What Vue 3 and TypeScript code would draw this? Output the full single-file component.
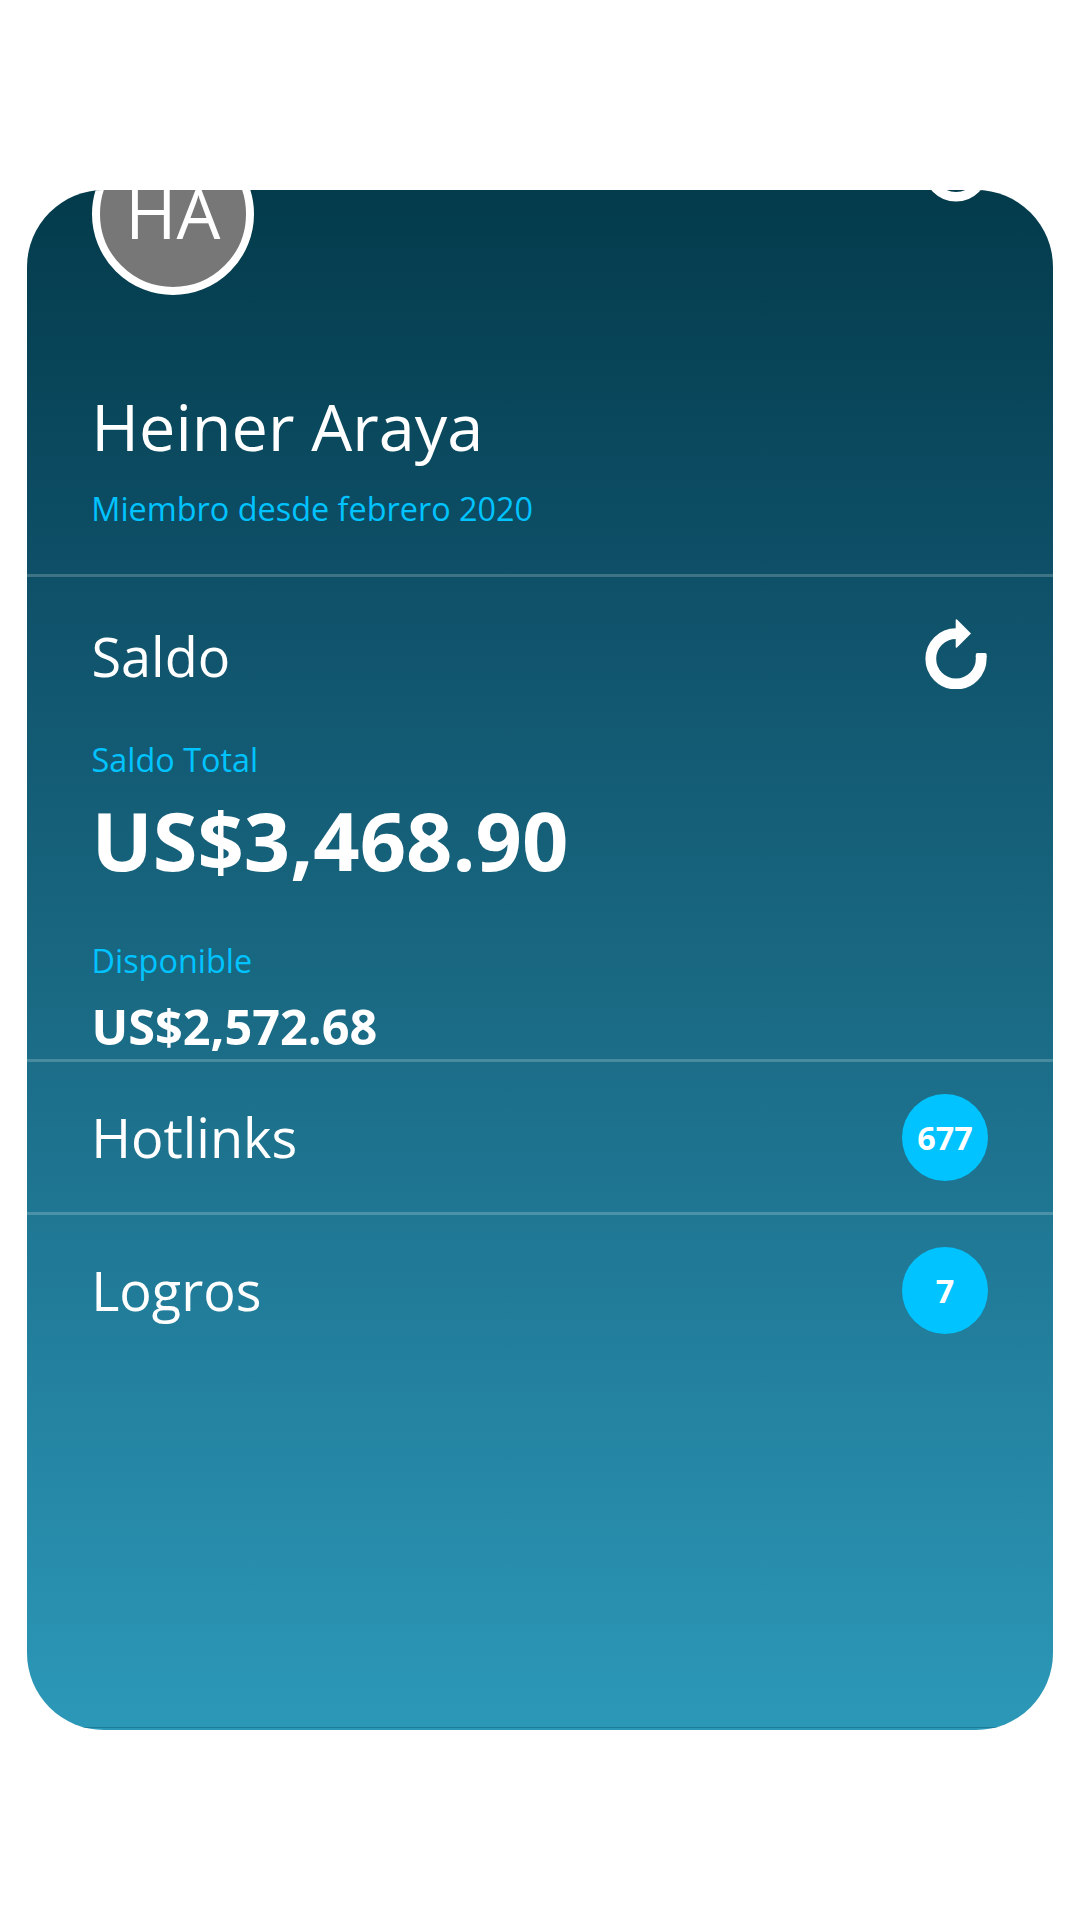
<script setup lang="ts">
interface CounterRow {
  label: string
  count: number
}

const counters: CounterRow[] = [
  { label: 'Hotlinks', count: 677 },
  { label: 'Logros', count: 7 },
]
</script>

<template>
  <main class="screen">
    <article class="card">
      <header class="profile">
        <div class="profile-top">
          <div class="avatar">HA</div>
          <svg class="ring" width="64" height="70" viewBox="0 0 64 70">
            <circle cx="32" cy="36.6" r="27.2" fill="none" stroke="#fff" stroke-width="9.6" />
          </svg>
        </div>
        <h1 class="name">Heiner Araya</h1>
        <p class="label since">Miembro desde febrero 2020</p>
      </header>

      <section class="balance">
        <div class="balance-head">
          <h2 class="title">Saldo</h2>
          <svg class="refresh" width="63" height="70" viewBox="0 0 63 70">
            <path
              d="M31 14.6A25.2 25.2 0 1 0 56.2 39.8V37"
              fill="none"
              stroke="#fff"
              stroke-width="10.8"
            />
            <path d="M50.8 38V35.5Q50.8 34 52.3 34H60.1Q61.6 34 61.6 35.5V38Z" fill="#fff" />
            <path d="M30.7 0.8Q31 0 32 0.6L46 14.4L32 28.4Q31 29 30.7 28.2Z" fill="#fff" />
          </svg>
        </div>
        <p class="label total-label">Saldo Total</p>
        <p class="total">US$3,468.90</p>
        <p class="label available-label">Disponible</p>
        <p class="available">US$2,572.68</p>
      </section>

      <section v-for="row in counters" :key="row.label" class="counter">
        <h2 class="title">{{ row.label }}</h2>
        <span class="badge">{{ row.count }}</span>
      </section>

      <div class="footer-rule"></div>
    </article>
  </main>
</template>

<style>
body {
  margin: 0;
  background: #fff;
}
</style>

<style scoped>
.screen {
  box-sizing: border-box;
  width: 1080px;
  height: 1920px;
  padding: 190px 27px;
  background: #fff;
  font-family: "Open Sans", "Noto Sans", sans-serif;
  color: #fff;
}
.card {
  display: flex;
  flex-direction: column;
  height: 1540px;
  border-radius: 77px;
  overflow: hidden;
  background: linear-gradient(#033b4b, #0e5068 25%, #1a6a84 53%, #207a97 70%, #2c98b8);
}
h1,
h2,
p {
  margin: 0;
  font-weight: 400;
  white-space: nowrap;
}
.profile {
  box-sizing: border-box;
  flex: none;
  height: 387px;
  padding: 0 65px 0 64.3px;
  border-bottom: 3px solid rgba(255, 255, 255, 0.2);
}
.profile-top {
  display: flex;
  justify-content: space-between;
  height: 162px;
  margin-top: -57px;
}
.avatar {
  box-sizing: border-box;
  width: 162px;
  height: 162px;
  margin-left: 0.5px;
  border: 8px solid #fff;
  border-radius: 50%;
  background: #777;
  font-size: 69.5px;
  line-height: 142px;
  text-align: center;
}
.name {
  margin-top: 86px;
  font-size: 64.8px;
  line-height: 90px;
}
.label {
  font-size: 32.4px;
  line-height: 46px;
  color: #00c3ff;
}
.since {
  margin-top: 14px;
}
.balance {
  box-sizing: border-box;
  flex: none;
  height: 485px;
  padding: 41px 65px 0 64.5px;
  border-bottom: 3px solid rgba(255, 255, 255, 0.2);
}
.balance-head {
  display: flex;
  justify-content: space-between;
}
.title {
  font-size: 54px;
  line-height: 76px;
}
.refresh {
  margin-top: 1px;
}
.total-label {
  margin-top: 42px;
}
.total {
  margin-top: 2px;
  font-size: 81.1px;
  font-weight: 700;
  line-height: 111px;
}
.available-label {
  margin-top: 42px;
}
.available {
  margin-top: 10px;
  font-size: 48.6px;
  font-weight: 700;
  line-height: 66px;
}
.counter {
  display: flex;
  align-items: center;
  justify-content: space-between;
  flex: none;
  height: 150px;
  padding: 0 65px 0 64.2px;
}
.counter + .counter {
  border-top: 3px solid rgba(255, 255, 255, 0.2);
}
.badge {
  width: 86px;
  height: 87px;
  border-radius: 50%;
  background: #00c3ff;
  font-size: 32.4px;
  font-weight: 700;
  line-height: 87px;
  text-align: center;
}
.footer-rule {
  height: 1px;
  margin: auto 0 2px;
  background: #1b7b98;
}
</style>
